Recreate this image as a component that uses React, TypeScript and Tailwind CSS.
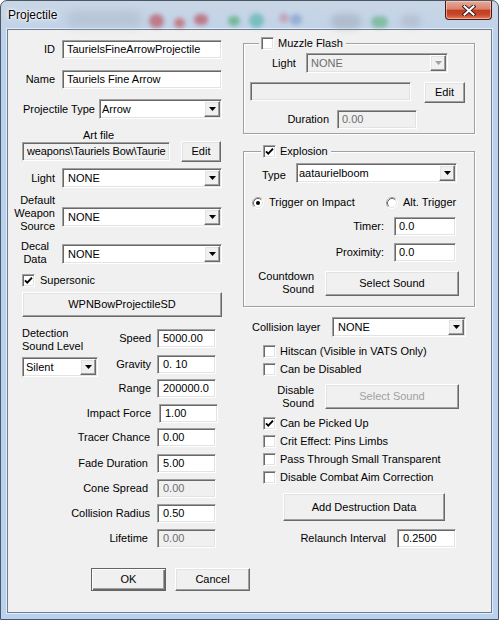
import React from "react";

const sunken =
  "border border-t-[#a0a0a0] border-l-[#a0a0a0] border-b-white border-r-white shadow-[inset_1px_1px_0_#696969,inset_-1px_-1px_0_#e3e3e3]";
const raised =
  "border border-t-white border-l-white border-b-[#696969] border-r-[#696969] shadow-[inset_-1px_-1px_0_#a0a0a0,inset_1px_1px_0_#e3e3e3]";

type EditProps = { cls: string; value: string; disabled?: boolean; readOnly?: boolean; pad?: string };
function Edit({ cls, value, disabled, readOnly, pad = "pl-[4px]" }: EditProps) {
  const bg = disabled
    ? "bg-[#f0f0f0] text-[#6d6d6d]"
    : readOnly
    ? "bg-[#f0f0f0] text-black"
    : "bg-white text-black";
  return (
    <div className={`${cls} ${sunken} ${bg} ${pad} flex items-center whitespace-nowrap overflow-hidden shrink-0`}>
      {value}
    </div>
  );
}

type ComboProps = { cls: string; value: string; disabled?: boolean; pad?: string };
function Combo({ cls, value, disabled, pad = "pl-[4px]" }: ComboProps) {
  return (
    <div
      className={`${cls} ${sunken} ${disabled ? "bg-[#f0f0f0] text-[#6d6d6d]" : "bg-white text-black"} flex items-stretch p-[1px] shrink-0`}
    >
      <div className={`flex-1 flex items-center ${pad} whitespace-nowrap overflow-hidden`}>{value}</div>
      <div className={`w-[16px] ${raised} bg-[#f0f0f0] flex items-center justify-center`}>
        <svg width="7" height="4" viewBox="0 0 7 4">
          <path d="M0 0H7L3.5 4Z" fill={disabled ? "#a0a0a0" : "#000"} />
        </svg>
      </div>
    </div>
  );
}

type BtnProps = { cls: string; children: React.ReactNode; disabled?: boolean; def?: boolean };
function Btn({ cls, children, disabled, def }: BtnProps) {
  return (
    <div
      className={`${cls} ${
        def
          ? "border border-[#646464] shadow-[inset_1px_1px_0_#fff,inset_-1px_-1px_0_#696969,inset_-2px_-2px_0_#a0a0a0]"
          : raised
      } bg-[#f0f0f0] flex items-center justify-center whitespace-nowrap shrink-0 ${
        disabled ? "text-[#a0a0a0]" : "text-black"
      }`}
    >
      {children}
    </div>
  );
}

function Check({ checked }: { checked?: boolean }) {
  return (
    <div className={`w-[13px] h-[13px] shrink-0 ${sunken} bg-white flex items-center justify-center`}>
      {checked && (
        <svg width="9" height="9" viewBox="0 0 9 9">
          <path d="M1 4.3L3.3 6.7L8 1.7" fill="none" stroke="#000" strokeWidth="1.9" />
        </svg>
      )}
    </div>
  );
}

function Radio({ checked }: { checked?: boolean }) {
  return (
    <svg width="12" height="12" viewBox="0 0 12 12" className="shrink-0">
      <circle cx="6" cy="6" r="5" fill="#fff" />
      <path d="M2.11 9.89A5.5 5.5 0 0 1 9.89 2.11" fill="none" stroke="#a0a0a0" />
      <path d="M9.89 2.11A5.5 5.5 0 0 1 2.11 9.89" fill="none" stroke="#ffffff" />
      <path d="M2.82 9.18A4.5 4.5 0 0 1 9.18 2.82" fill="none" stroke="#696969" />
      <path d="M9.18 2.82A4.5 4.5 0 0 1 2.82 9.18" fill="none" stroke="#e3e3e3" />
      {checked && <circle cx="6" cy="6" r="2" fill="#000" />}
    </svg>
  );
}

type GroupProps = { cls: string; hcls: string; title: string; checked?: boolean; children: React.ReactNode };
function Group({ cls, hcls, title, checked, children }: GroupProps) {
  return (
    <div className={`${cls} border border-[#a0a0a0] shadow-[inset_1px_1px_0_#fff,1px_1px_0_#fff] flex flex-col`}>
      <div className={`${hcls} -mt-[7px] pl-[2px] pr-[3px] self-start bg-[#f0f0f0] flex items-center h-[13px]`}>
        <Check checked={checked} />
        <span className="ml-[4px] whitespace-nowrap">{title}</span>
      </div>
      {children}
    </div>
  );
}

function CheckRow({ cls, label, checked }: { cls: string; label: string; checked?: boolean }) {
  return (
    <div className={`${cls} flex items-center h-[18px] ml-[20px]`}>
      <Check checked={checked} />
      <span className="ml-[4px] whitespace-nowrap">{label}</span>
    </div>
  );
}

export default function App() {
  return (
    <div className="w-[499px] h-[620px] relative overflow-hidden rounded-t-[7px] border border-[#4b5768] bg-[linear-gradient(180deg,#c9d6e5_0px,#c2d3e8_26px,#bad2ee_40px,#bad2ee_100%)] font-['Liberation_Sans',Arial,sans-serif] text-[11px] leading-[13px] text-black flex flex-col">
      {/* Title bar */}
      <div className="relative h-[28px] flex items-start shrink-0">
        <div className="absolute left-[66px] top-[10px] w-[75px] h-[16px] rounded-full bg-[#aab6c4] blur-[4px] opacity-50" />
        <div className="absolute left-[148px] top-[13px] w-[15px] h-[14px] rounded-full bg-[#b7424e] blur-[2px] opacity-60" />
        <div className="absolute left-[173px] top-[17px] w-[11px] h-[10px] rounded-full bg-[#c04848] blur-[2px] opacity-60" />
        <div className="absolute left-[193px] top-[13px] w-[14px] h-[11px] rounded-full bg-[#b8404c] blur-[2px] opacity-60" />
        <div className="absolute left-[227px] top-[15px] w-[12px] h-[10px] rounded-full bg-[#3fa868] blur-[2px] opacity-60" />
        <div className="absolute left-[248px] top-[12px] w-[15px] h-[15px] rounded-full bg-[#4bb0a6] blur-[2px] opacity-60" />
        <div className="absolute left-[278px] top-[12px] w-[10px] h-[10px] rounded-full bg-[#c07080] blur-[2px] opacity-45" />
        <div className="absolute left-[289px] top-[13px] w-[12px] h-[11px] rounded-full bg-[#6f90c8] blur-[2px] opacity-55" />
        <div className="absolute left-[330px] top-[13px] w-[30px] h-[15px] rounded-full bg-[#9aa6b2] blur-[3px] opacity-50" />
        <div className="absolute left-[370px] top-[15px] w-[17px] h-[12px] rounded-full bg-[#52a872] blur-[2px] opacity-55" />
        <div className="absolute left-[400px] top-[14px] w-[20px] h-[12px] rounded-full bg-[#a4afbb] blur-[3px] opacity-50" />
        <div className="relative h-[28px] flex items-center pl-[7px] text-[12px] [text-shadow:0_0_6px_#fff,0_0_3px_#fff,0_0_2px_#fff]">
          Projectile
        </div>
        <div className="relative ml-auto mr-[6px] w-[47px] h-[19px] rounded-b-[4px] border border-[#4a1a12] border-t-0 bg-[linear-gradient(180deg,#e8aa9a_0%,#d8836d_45%,#c23d20_52%,#c8472b_75%,#e07c5a_100%)] shadow-[inset_0_0_0_1px_rgba(255,220,210,0.55)] flex items-center justify-center">
          <svg width="14" height="11" viewBox="0 0 14 11">
            <path d="M2.5 1.5L11.5 9.5M11.5 1.5L2.5 9.5" stroke="#3b2222" strokeWidth="4" strokeLinecap="square" />
            <path d="M2.5 1.5L11.5 9.5M11.5 1.5L2.5 9.5" stroke="#ffffff" strokeWidth="2" strokeLinecap="square" />
          </svg>
        </div>
      </div>

      {/* Client area */}
      <div className="mx-[6px] h-[584px] shrink-0 border border-[#6f7d8f] bg-[#f0f0f0] flex flex-col shadow-[0_0_0_1px_#e2edf9]">
        <div className="flex">
          {/* Left column */}
          <div className="w-[235px] flex flex-col shrink-0">
            <div className="flex items-center mt-[10px] h-[19px]">
              <div className="w-[47px] text-right">ID</div>
              <Edit cls="ml-[7px] w-[160px] h-[19px]" value="TaurielsFineArrowProjectile" />
            </div>
            <div className="flex items-center mt-[11px] h-[19px]">
              <div className="w-[47px] text-right">Name</div>
              <Edit cls="ml-[7px] w-[160px] h-[19px]" value="Tauriels Fine Arrow" />
            </div>
            <div className="flex items-center mt-[10px] h-[20px]">
              <div className="w-[91px] pl-[15px] whitespace-nowrap">Projectile Type</div>
              <Combo cls="w-[123px] h-[20px]" value="Arrow" pad="pl-[1px]" />
            </div>
            <div className="mt-[10px] h-[12px] leading-[12px] pl-[75px]">Art file</div>
            <div className="flex items-center h-[21px]">
              <Edit
                cls="ml-[14px] w-[148px] h-[19px] tracking-[-0.15px]"
                value={"weapons\\Tauriels Bow\\Taurie"}
                readOnly
                pad="pl-[4px]"
              />
              <Btn cls="ml-[11px] w-[40px] h-[21px]">Edit</Btn>
            </div>
            <div className="flex items-center mt-[6px] h-[20px]">
              <div className="w-[47px] text-right">Light</div>
              <Combo cls="ml-[7px] w-[160px] h-[20px]" value="NONE" />
            </div>
            <div className="flex items-start mt-[6px]">
              <div className="w-[47px] text-right">
                Default
                <br />
                Weapon
                <br />
                Source
              </div>
              <Combo cls="ml-[7px] mt-[13px] w-[160px] h-[20px]" value="NONE" />
            </div>
            <div className="flex items-start mt-[7px]">
              <div className="w-[54px] text-center">
                Decal
                <br />
                Data
              </div>
              <Combo cls="mt-[4px] w-[160px] h-[20px]" value="NONE" />
            </div>
            <div className="flex items-center mt-[8px] h-[13px] ml-[14px]">
              <Check checked />
              <span className="ml-[5px]">Supersonic</span>
            </div>
            <Btn cls="mt-[5px] ml-[14px] w-[200px] h-[25px]">WPNBowProjectileSD</Btn>
            <div className="flex mt-[10px]">
              <div className="ml-[14px] w-[76px] flex flex-col shrink-0">
                <div className="whitespace-nowrap">
                  Detection
                  <br />
                  Sound Level
                </div>
                <Combo cls="mt-[4px] w-[76px] h-[20px]" value="Silent" pad="pl-[2px]" />
              </div>
              <div className="flex flex-col">
                <div className="flex items-center mt-[2px] h-[19px]">
                  <div className="w-[53px] text-right">Speed</div>
                  <Edit cls="ml-[6px] w-[59px] h-[19px]" value="5000.00" pad="pl-[5px]" />
                </div>
                <div className="flex items-center mt-[7px] h-[19px]">
                  <div className="w-[53px] text-right">Gravity</div>
                  <Edit cls="ml-[6px] w-[59px] h-[19px]" value="0. 10" pad="pl-[5px]" />
                </div>
              </div>
            </div>
            <div className="flex items-center mt-[2px] h-[19px]">
              <div className="w-[143px] text-right whitespace-nowrap">Range</div>
              <Edit cls="ml-[6px] w-[59px] h-[19px]" value="200000.0" pad="pl-[5px]" />
            </div>
            <div className="flex items-center mt-[6px] h-[19px]">
              <div className="w-[143px] text-right whitespace-nowrap">Impact Force</div>
              <Edit cls="ml-[8px] w-[59px] h-[19px]" value="1.00" pad="pl-[5px]" />
            </div>
            <div className="flex items-center mt-[5px] h-[19px]">
              <div className="w-[143px] pr-[1px] text-right whitespace-nowrap">Tracer Chance</div>
              <Edit cls="ml-[6px] w-[59px] h-[19px]" value="0.00" pad="pl-[5px]" />
            </div>
            <div className="flex items-center mt-[7px] h-[19px]">
              <div className="w-[143px] pr-[3px] text-right whitespace-nowrap">Fade Duration</div>
              <Edit cls="ml-[6px] w-[59px] h-[19px]" value="5.00" pad="pl-[5px]" />
            </div>
            <div className="flex items-center mt-[6px] h-[19px]">
              <div className="w-[143px] pr-[3px] text-right whitespace-nowrap">Cone Spread</div>
              <Edit cls="ml-[6px] w-[59px] h-[19px]" value="0.00" pad="pl-[5px]" disabled />
            </div>
            <div className="flex items-center mt-[6px] h-[19px]">
              <div className="w-[143px] pr-[1px] text-right whitespace-nowrap">Collision Radius</div>
              <Edit cls="ml-[6px] w-[59px] h-[19px]" value="0.50" pad="pl-[5px]" />
            </div>
            <div className="flex items-center mt-[6px] h-[19px]">
              <div className="w-[143px] pr-[3px] text-right whitespace-nowrap">Lifetime</div>
              <Edit cls="ml-[6px] w-[59px] h-[19px]" value="0.00" pad="pl-[5px]" disabled />
            </div>
          </div>

          {/* Right column */}
          <div className="w-[232px] flex flex-col shrink-0">
            <Group cls="mt-[13px] h-[91px]" hcls="ml-[15px]" title="Muzzle Flash">
              <div className="flex items-center mt-[3px] h-[20px]">
                <div className="ml-[28px] w-[34px]">Light</div>
                <Combo cls="w-[142px] h-[20px]" value="NONE" disabled pad="pl-[3px]" />
              </div>
              <div className="flex items-start mt-[9px]">
                <Edit cls="ml-[6px] w-[161px] h-[19px]" value="" disabled />
                <Btn cls="ml-[13px] w-[41px] h-[21px]">Edit</Btn>
              </div>
              <div className="flex items-center mt-[7px] h-[19px]">
                <div className="w-[93px] pr-[8px] text-right">Duration</div>
                <Edit cls="w-[80px] h-[19px]" value="0.00" disabled />
              </div>
            </Group>

            <Group cls="mt-[17px] h-[156px]" hcls="ml-[17px]" title="Explosion" checked>
              <div className="flex items-start mt-[5px] h-[20px]">
                <div className="ml-[18px] w-[34px] mt-[6px]">Type</div>
                <Combo cls="w-[161px] h-[20px]" value="aataurielboom" pad="pl-[1px]" />
              </div>
              <div className="flex items-center mt-[13px] h-[13px] ml-[8px]">
                <div className="w-[134px] flex items-center shrink-0">
                  <Radio checked />
                  <span className="ml-[5px] whitespace-nowrap">Trigger on Impact</span>
                </div>
                <Radio />
                <span className="ml-[5px] whitespace-nowrap">Alt. Trigger</span>
              </div>
              <div className="flex items-center mt-[8px] h-[19px]">
                <div className="w-[140px] text-right">Timer:</div>
                <Edit cls="ml-[10px] w-[62px] h-[19px]" value="0.0" />
              </div>
              <div className="flex items-center mt-[7px] h-[19px]">
                <div className="w-[140px] text-right">Proximity:</div>
                <Edit cls="ml-[10px] w-[62px] h-[19px]" value="0.0" />
              </div>
              <div className="flex items-start mt-[8px]">
                <div className="w-[70px] text-right">
                  Countdown
                  <br />
                  Sound
                </div>
                <Btn cls="ml-[11px] mt-[1px] w-[134px] h-[25px]">Select Sound</Btn>
              </div>
            </Group>

            <div className="flex items-center mt-[10px] h-[20px]">
              <div className="w-[89px] pl-[9px] whitespace-nowrap">Collision layer</div>
              <Combo cls="w-[134px] h-[20px]" value="NONE" pad="pl-[4px]" />
            </div>
            <CheckRow cls="mt-[5px]" label="Hitscan (Visible in VATS Only)" />
            <CheckRow cls="" label="Can be Disabled" />
            <div className="flex items-start mt-[6px]">
              <div className="w-[71px] text-right">
                Disable
                <br />
                Sound
              </div>
              <Btn cls="ml-[11px] w-[134px] h-[25px]" disabled>
                Select Sound
              </Btn>
            </div>
            <CheckRow cls="mt-[4px]" label="Can be Picked Up" checked />
            <CheckRow cls="" label="Crit Effect: Pins Limbs" />
            <CheckRow cls="" label="Pass Through Small Transparent" />
            <CheckRow cls="" label="Disable Combat Aim Correction" />
            <Btn cls="mt-[7px] ml-[40px] w-[162px] h-[28px]">Add Destruction Data</Btn>
            <div className="flex items-center mt-[8px] h-[19px]">
              <div className="w-[143px] text-right whitespace-nowrap">Relaunch Interval</div>
              <Edit cls="ml-[11px] w-[59px] h-[19px]" value="0.2500" pad="pl-[5px]" />
            </div>
          </div>
        </div>

        <div className="flex mt-[20px]">
          <Btn cls="ml-[83px] w-[75px] h-[23px]" def>
            OK
          </Btn>
          <Btn cls="ml-[9px] w-[75px] h-[23px]">Cancel</Btn>
        </div>
      </div>
    </div>
  );
}
